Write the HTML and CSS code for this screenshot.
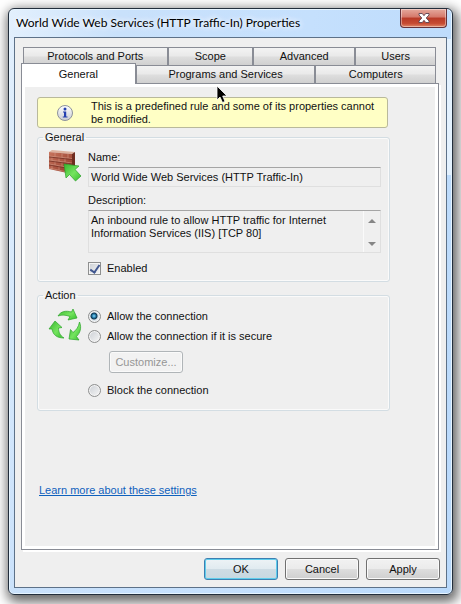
FILE: index.html
```html
<!DOCTYPE html>
<html lang="en">
<head>
<meta charset="utf-8">
<title>World Wide Web Services (HTTP Traffic-In) Properties</title>
<link rel="stylesheet" href="styles.css">
</head>
<body>
<main class="window">
  <header class="titlebar">
    <h1 class="title">World Wide Web Services (HTTP Traffic-In) Properties</h1>
    <button class="close" type="button" aria-label="Close">
      <svg width="12" height="10" viewBox="0 0 12 10"><path d="M1 .5h3.300L6 2.700 7.700.5H11V2L8.200 5 11 8v1.500H7.700L6 7.300 4.300 9.500H1V8L3.800 5 1 2z" fill="#fff" stroke="#5b4350" stroke-width=".9"/></svg>
    </button>
  </header>
  <form class="client">
    <nav class="tabs">
      <div class="tab-row back">
        <button type="button" class="tab protocols">Protocols and Ports</button>
        <button type="button" class="tab scope">Scope</button>
        <button type="button" class="tab advanced">Advanced</button>
        <button type="button" class="tab users">Users</button>
      </div>
      <div class="tab-row front">
        <button type="button" class="tab active">General</button>
        <button type="button" class="tab programs">Programs and Services</button>
        <button type="button" class="tab computers">Computers</button>
      </div>
    </nav>
    <section class="panel">
      <div class="notice">
        <svg width="18" height="18" viewBox="0 0 18 18">
          <defs><linearGradient id="disc" x2="0" y2="1"><stop offset="0" stop-color="#fff"/><stop offset="1" stop-color="#c9ccd2"/></linearGradient></defs>
          <circle cx="9" cy="9" r="7.500" fill="url(#disc)" stroke="#8d929b"/>
          <circle cx="9" cy="5" r="1.500" fill="#2440b0"/>
          <path d="M7 7.500h3.200v5H11.500V13.500H6.800V12.500H8V8.500H7z" fill="#2440b0"/>
        </svg>
        <p>This is a predefined rule and some of its properties cannot be modified.</p>
      </div>
      <fieldset class="group general">
        <legend>General</legend>
        <div class="group-body">
          <svg class="group-icon" width="34" height="34" viewBox="0 0 34 34">
            <defs>
              <linearGradient id="leaf" x2="1" y2="1"><stop offset="0" stop-color="#36b52d"/><stop offset=".55" stop-color="#75e45f"/><stop offset="1" stop-color="#35bd2c"/></linearGradient>
              <linearGradient id="brick" x2="1" y2="1"><stop offset="0" stop-color="#c8755e"/><stop offset="1" stop-color="#8d3424"/></linearGradient>
            </defs>
            <path d="M1 3 4 1 27 3 24 5z" fill="#ddb29f"/>
            <path d="M24 5 27 3V22L24 25z" fill="#6f2c20"/>
            <path d="M1 3 24 5V25L1 20z" fill="url(#brick)"/>
            <path d="M1 7 24 9.500M1 11 24 14M1 15 24 19M1 19 24 24M7 4v3.500M14 4.500v4M20 5v4M4 7.500v4M11 8.500v4M17 9v4M7 12v4M14 13v4M20 14v4M4 16v4M11 17v4" fill="none" stroke="#d39a86" stroke-width=".6"/>
            <path d="M1 8 24 10.500M1 12 24 15M1 16 24 20" fill="none" stroke="#6c2a20" stroke-width=".7"/>
            <path d="M16 15 31 17 27 20.500 33 27 27.500 32 21.500 25.500 18 29z" fill="url(#leaf)" stroke="#2c9e2b" stroke-width=".7" stroke-linejoin="round"/>
          </svg>
          <div class="fields">
            <label for="name">Name:</label>
            <input class="box name" id="name" type="text" readonly value="World Wide Web Services (HTTP Traffic-In)">
            <label for="description">Description:</label>
            <div class="box description">
              <textarea id="description" readonly>An inbound rule to allow HTTP traffic for Internet Information Services (IIS) [TCP 80]</textarea>
              <div class="scroll">
                <svg width="8" height="4" viewBox="0 0 8 4"><path d="M0 4 4 0 8 4z" fill="#858585"/></svg>
                <svg width="8" height="4" viewBox="0 0 8 4"><path d="M0 0H8L4 4z" fill="#858585"/></svg>
              </div>
            </div>
            <label class="choice"><input type="checkbox" checked><span>Enabled</span></label>
          </div>
        </div>
      </fieldset>
      <fieldset class="group action">
        <legend>Action</legend>
        <div class="group-body">
          <svg class="group-icon cycle" width="34" height="34" viewBox="0 0 34 34">
            <g fill="url(#leaf)" stroke="#2ba329" stroke-width=".7" stroke-linejoin="round">
              <path d="M10 8C13 3 18 2.500 23.500 4L25 1 29 10 20 12 22 8.500C18 7 14 6.500 10 8z"/>
              <path d="M31.500 14C34 20 32 25 28.500 28.500L31 32 21 31 22.500 21.500 25 24.500C28.500 22 30.500 19 31.500 14z"/>
              <path d="M16 30C9 30 5 27 4 21L1 21 7 13 14 19.500 10.500 20C10.500 24 12 27.500 16 30z"/>
            </g>
          </svg>
          <div class="fields choices">
            <label class="choice"><input type="radio" name="action" checked><span>Allow the connection</span></label>
            <label class="choice"><input type="radio" name="action"><span>Allow the connection if it is secure</span></label>
            <button class="button customize" type="button" disabled>Customize...</button>
            <label class="choice"><input type="radio" name="action"><span>Block the connection</span></label>
          </div>
        </div>
      </fieldset>
      <a class="learn" href="#">Learn more about these settings</a>
    </section>
    <footer class="buttons">
      <button class="button default" type="button">OK</button>
      <button class="button" type="button">Cancel</button>
      <button class="button" type="button">Apply</button>
    </footer>
  </form>
</main>
<svg class="cursor" width="12" height="19" viewBox="0 0 12 19"><path d="M1 1V15L4 12 6.500 17.500 9 16.500 6.700 11H11z" fill="#000" stroke="#fff" stroke-width=".8"/></svg>
</body>
</html>
```
FILE: styles.css
```css
* { box-sizing: border-box; }

body {
  margin: 0;
  min-height: 100vh;
  display: flex;
  padding: 8px 8px 9px;
  position: relative;
  overflow: hidden;
  background: #fff;
  color: #111;
  font: 11px/13px "Liberation Sans", Arial, sans-serif;
}

button, input, textarea { font: inherit; color: inherit; margin: 0; }

.window {
  flex: 1;
  display: flex;
  flex-direction: column;
  padding: 0 5px 6px;
  border: 1px solid #222e3c;
  border-radius: 6px;
  background:
    linear-gradient(#e3f1fe, #e3f1fe) 100% 30px / 7px 136px no-repeat,
    linear-gradient(100deg, #e3f0fd 0, #c9e1fb 110px, #c5e0fd 300px, #b9d9fb 100%);
  box-shadow: inset 0 0 0 1px #e6f4ff, 2px 4px 12px 3px rgba(0, 0, 0, .6);
}

.titlebar { display: flex; justify-content: space-between; height: 28px; }

.title {
  margin: 0;
  padding: 5px 0 0 2px;
  font: 12px/18px Lato, "Open Sans", sans-serif;
  color: #000;
  white-space: nowrap;
  text-shadow: 0 0 6px #fff, 0 0 6px #fff;
}

.close {
  width: 47px;
  height: 19px;
  padding: 0;
  display: flex;
  align-items: center;
  justify-content: center;
  border: 1px solid #65323a;
  border-top: 0;
  border-radius: 0 0 4px 4px;
  background: linear-gradient(#e5a99d, #d5786a 45%, #b83a27 50%, #c64b33 80%, #e0886a);
  box-shadow: inset 0 0 0 1px rgba(255, 255, 255, .4);
}

.client {
  flex: 1;
  display: flex;
  flex-direction: column;
  padding: 9px 6px 7px;
  border: 1px solid #5d7188;
  background: #efefef;
}

.tabs { padding-right: 4px; }
.tab-row { display: flex; }
.back { padding-left: 2px; }

.tab {
  height: 18px;
  padding: 0;
  border: 1px solid #898c95;
  border-bottom: 0;
  background: linear-gradient(#f3f3f3, #e9e9e9 48%, #dedede 52%, #d0d0d0);
}
.protocols { flex: 145 1 0; }
.scope { flex: 85 1 0; }
.advanced { flex: 102 1 0; }
.users { flex: 80 1 0; }
.programs { flex: 180 1 0; }
.computers { flex: 120 1 0; }

.active {
  flex: 114 1 0;
  height: 21px;
  margin: -2px 0 -1px;
  position: relative;
  background: #fff;
}

.panel {
  flex: 1;
  margin-right: 1px;
  padding: 10px 48px 0 12px;
  border: 1px solid #898c95;
  box-shadow: inset 0 0 0 3px #fff, 2px 2px #fff;
}

.notice {
  display: flex;
  align-items: center;
  height: 31px;
  margin: 3px 2px 0 3px;
  padding: 0 8px 0 18px;
  border: 1px solid #b9b99b;
  border-radius: 3px;
  background: #ffffc5;
}
.notice svg { flex: none; }
.notice p { margin: 0 0 0 17px; }

.group {
  min-width: 0;
  margin: 3px 0 0 3px;
  padding: 0 8px;
  border: 1px solid #d3dde3;
  border-radius: 3px;
  box-shadow: inset 0 0 0 1px #fafafa;
}
.group legend { padding: 0 2px; margin-left: -3px; }
.general { height: 151px; }
.action { height: 122px; margin-top: 7px; }

.group-body { display: flex; }
.group-icon { flex: none; margin: 5px 6px 0 2px; }
.cycle { margin-top: 6px; }

.fields { flex: 1; min-width: 0; padding-top: 7px; }
.fields > label { display: block; }

.box {
  display: flex;
  width: 100%;
  border: 1px solid #dfdfdf;
  border-top-color: #a5a5a5;
  background: #efefef;
}
.name { height: 20px; margin: 3px 0 7px; padding: 0 2px; }
.description { height: 43px; margin-top: 3px; }
.description textarea {
  flex: 1;
  min-width: 0;
  height: 41px;
  padding: 3px 2px;
  border: 0;
  resize: none;
  overflow: hidden;
  background: transparent;
}
.scroll {
  width: 17px;
  display: flex;
  flex-direction: column;
  align-items: center;
  justify-content: space-between;
  padding: 8px 0 6px;
  border-left: 1px solid #fafafa;
}

.fields > .choice { display: flex; align-items: center; gap: 6px; height: 20px; }
.description + .choice { margin-top: 5px; }

.choice input {
  appearance: none;
  flex: none;
  width: 13px;
  height: 13px;
  border: 1px solid #8e8f8f;
  background: linear-gradient(135deg, #cbcfd5, #f6f6f6);
  box-shadow: inset 0 0 0 1px #f4f4f4;
}
.choice [type="radio"] { border-radius: 50%; }
.choice [type="radio"]:checked {
  background: radial-gradient(circle at 5px 5px, #8bdcff 0, #1b719f 2px, #12354d 3px, #dce5ec 4px);
}
.choice [type="checkbox"]:checked { display: grid; place-items: center; }
.choice [type="checkbox"]:checked::before {
  content: "";
  width: 4px;
  height: 8px;
  margin-bottom: 2px;
  border: solid #40568f;
  border-width: 0 2px 2px 0;
  transform: rotate(35deg);
}

.choices { padding-top: 4px; }

.button {
  width: 74px;
  height: 22px;
  padding: 0;
  border: 1px solid #707070;
  border-radius: 3px;
  background: linear-gradient(#f2f2f2, #ebebeb 48%, #dddddd 52%, #cfcfcf);
  box-shadow: inset 0 0 0 1px #fafafa;
}
.default {
  border-color: #3c7fb1;
  background: linear-gradient(#edf3f6, #e1ebf0 48%, #cedce4 52%, #c6d8e1);
  box-shadow: inset 0 0 0 1px #5fcdec;
}
.customize {
  display: block;
  margin: 5px 0 7px 21px;
  border-color: #b0b5b8;
  background: #f2f2f2;
  color: #969696;
}

.learn {
  display: inline-block;
  margin: 73px 0 0 5px;
  color: #0f61bd;
}

.buttons {
  display: flex;
  justify-content: flex-end;
  gap: 7px;
  padding-top: 8px;
}

.cursor { position: absolute; left: 216px; top: 85px; }
```
